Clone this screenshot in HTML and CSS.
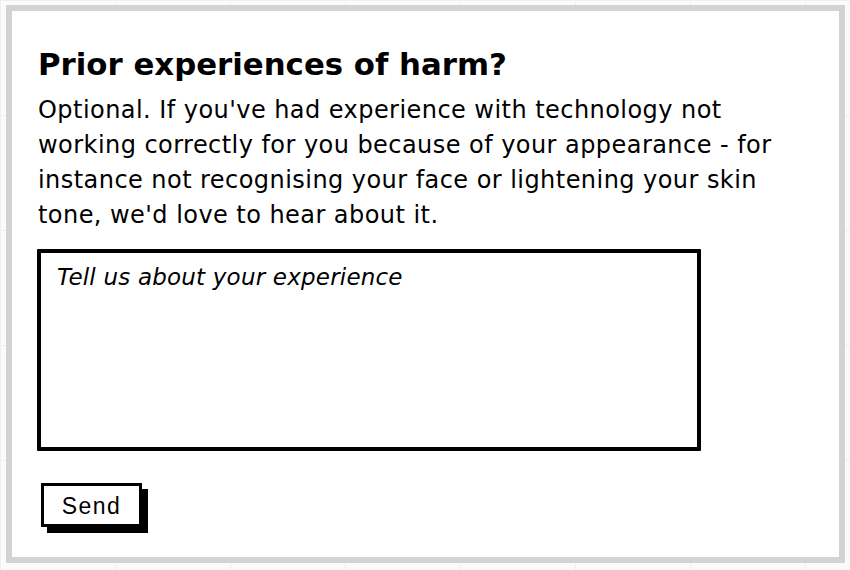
FILE: index.html
```html
<!DOCTYPE html>
<html lang="en">
<head>
<meta charset="utf-8">
<title>Prior experiences of harm?</title>
<link rel="stylesheet" href="styles.css">
</head>
<body>
<div class="panel">
  <h1 class="title">Prior experiences of harm?</h1>
  <p class="intro">Optional. If you've had experience with technology not working correctly for you because of your appearance - for instance not recognising your face or lightening your skin tone, we'd love to hear about it.</p>
  <textarea class="story" placeholder="Tell us about your experience"></textarea>
  <div class="actions">
    <button class="send" type="button">Send</button>
  </div>
</div>
</body>
</html>
```
FILE: styles.css
```css
html, body {
  margin: 0;
  padding: 0;
}
body {
  width: 850px;
  height: 570px;
  background-color: #fbfbfb;
  background-image:
    linear-gradient(to right, #f0f0f0 1px, transparent 1px),
    linear-gradient(to bottom, #f0f0f0 1px, transparent 1px);
  background-size: 115px 115px;
  overflow: hidden;
  font-family: "DejaVu Sans", "Noto Sans", sans-serif;
  color: #000;
}
.panel {
  box-sizing: border-box;
  width: 839px;
  height: 558px;
  margin: 5px 0 0 6px;
  border: 6px solid #d3d3d3;
  background: #fff;
  padding: 0 0 0 26px;
  display: flex;
  flex-direction: column;
  align-items: flex-start;
}
.title {
  margin: 35px 0 0 0;
  font-size: 30.8px;
  line-height: 36px;
  font-weight: 700;
  letter-spacing: 0;
}
.intro {
  margin: 11px 0 0 0;
  width: 762px;
  font-size: 24px;
  line-height: 35px;
  letter-spacing: 0.45px;
}
.story {
  box-sizing: border-box;
  width: 664px;
  height: 202px;
  margin: 16px 0 0 -1px;
  border: 4px solid #000;
  border-radius: 1px;
  padding: 11px 16px;
  font-family: "DejaVu Sans", "Noto Sans", sans-serif;
  font-size: 23px;
  font-style: italic;
  letter-spacing: 0.2px;
  resize: none;
  outline: none;
  background: #fff;
}
.story::placeholder {
  color: #000;
  opacity: 1;
}
.actions {
  margin-top: 32px;
  display: flex;
}
.send {
  box-sizing: border-box;
  width: 101px;
  height: 44px;
  margin-left: 3px;
  border: 3px solid #000;
  background: #fff;
  box-shadow: 6px 6px 0 #000;
  padding: 3px 0 0 0;
  font-family: "Liberation Sans", Arial, sans-serif;
  font-size: 23px;
  letter-spacing: 1.5px;
  color: #000;
}
```
